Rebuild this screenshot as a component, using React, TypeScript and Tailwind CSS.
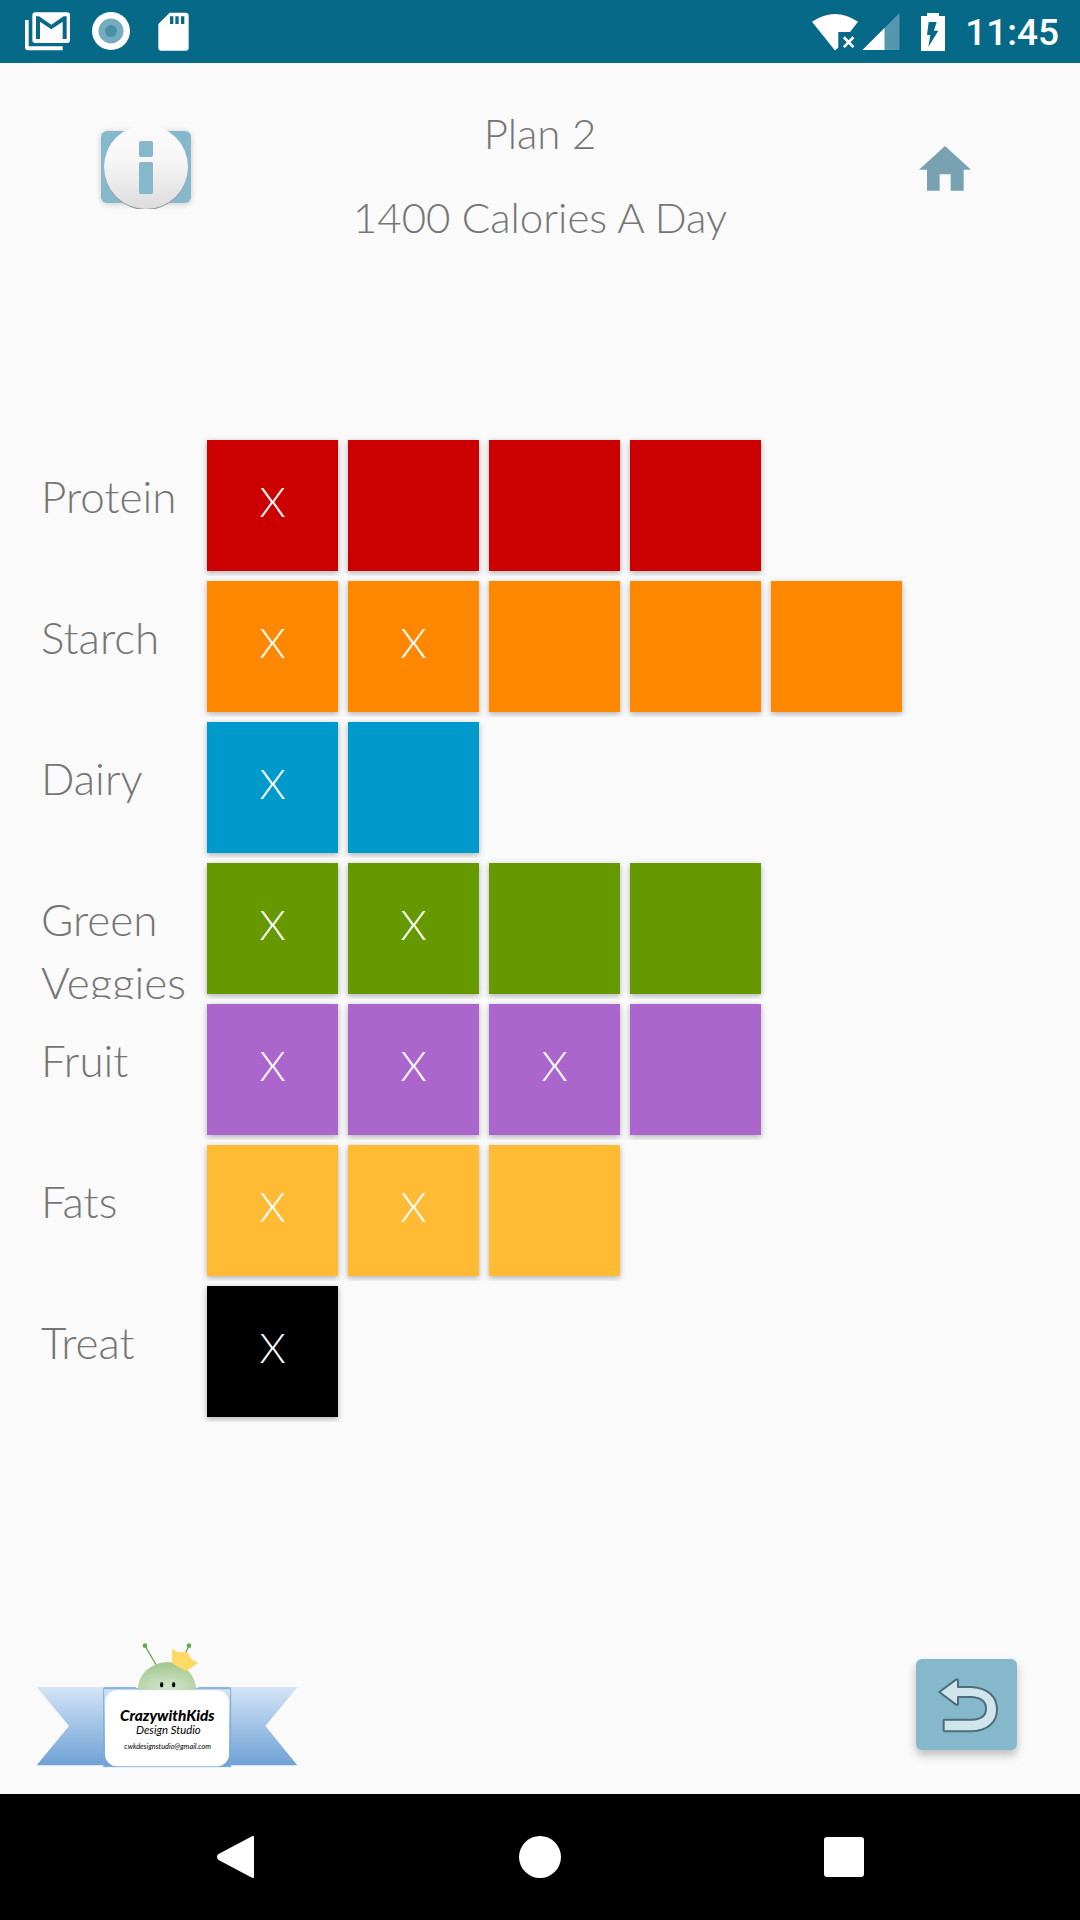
import { useState } from "react";

type Food = { name: string; total: number; used: number; color: string };

const foods: Food[] = [
  { name: "Protein", total: 4, used: 1, color: "bg-[#cc0000]" },
  { name: "Starch", total: 5, used: 2, color: "bg-[#ff8800]" },
  { name: "Dairy", total: 2, used: 1, color: "bg-[#0099cc]" },
  { name: "Green Veggies", total: 4, used: 2, color: "bg-[#669900]" },
  { name: "Fruit", total: 4, used: 3, color: "bg-[#aa66cc]" },
  { name: "Fats", total: 3, used: 2, color: "bg-[#ffbb33]" },
  { name: "Treat", total: 1, used: 1, color: "bg-black" },
];

function StatusBar() {
  return (
    <header className="flex h-[63px] items-center justify-between bg-[#076988] pl-4 pr-[21px] text-white">
      <div className="flex">
        <span className="flex w-[63px] justify-center">
          <svg width="45" height="39" viewBox="75 36 135 117" aria-label="Mail">
            <path d="M75 60h11v79h102v12H84q-9 0-9-9z" fill="#fff" />
            <rect x="97" y="37" width="113" height="92" rx="9" fill="#fff" />
            <path d="M108 117V49h9l37 25 37-25h9v68h-12V65l-34 23-34-23v52z" fill="#076988" />
          </svg>
        </span>
        <span className="flex w-[63px] justify-center">
          <svg width="38" height="38" viewBox="0 0 38 38" aria-label="Recording">
            <circle cx="19" cy="19" r="19" fill="#fff" />
            <circle cx="19" cy="19" r="12.5" fill="#76abbd" />
            <circle cx="19" cy="19" r="6" fill="#4690a9" />
          </svg>
        </span>
        <span className="flex w-[63px] justify-center">
          <svg width="31" height="39" viewBox="474 36 93 117" aria-label="Storage card">
            <path
              fillRule="evenodd"
              fill="#fff"
              d="M509 38h48q9 0 9 9v96q0 9-9 9h-73q-9 0-9-9V72zM510 49v23h10V49zM526 49v23h10V49zM543 49v23h10V49z"
            />
          </svg>
        </span>
      </div>
      <div className="flex items-center">
        <svg width="46" height="38" viewBox="95 36 140 114" aria-label="Wi-Fi without internet">
          <path d="M95 62Q165 15 235 62L211 93H175V141L165 149z" fill="#fff" />
          <path d="M192 109l29 30M221 109l-29 30" stroke="#fff" strokeWidth="8" />
        </svg>
        <svg className="ml-1" width="38" height="38" viewBox="248 36 113 114" aria-label="Signal">
          <path d="M360 36V147H249z" fill="#5598ae" />
          <path d="M315 81V147H249z" fill="#fff" />
        </svg>
        <svg className="ml-[21px]" width="24" height="38" viewBox="426 36 72 114" aria-label="Battery charging">
          <path d="M444 36h36v9h18v105h-72V45h18z" fill="#fff" />
          <path d="M449 63h24l-8 26h13l-30 49 6-36h-10z" fill="#076988" />
        </svg>
        <span className="ml-5 pt-0.5 font-['Roboto',sans-serif] text-[37px] font-medium leading-none">11:45</span>
      </div>
    </header>
  );
}

function Heading() {
  return (
    <div className="grid grid-cols-[1fr_auto_1fr] items-start pl-[101px] pr-[109px]">
      <button aria-label="Information" className="mt-[68px] h-[72px] w-[90px] rounded-md bg-[#85b8cb] shadow-[0_1px_6px_rgba(0,0,0,0.2)]">
        <svg className="overflow-visible" width="90" height="78" viewBox="0 0 90 78">
          <defs>
            <linearGradient id="disc" x1="0" y1="0" x2="0" y2="1">
              <stop offset="0" stopColor="#fbfbfb" />
              <stop offset="0.4" stopColor="#f7f7f7" />
              <stop offset="1" stopColor="#dcdcdc" />
            </linearGradient>
            <clipPath id="discEdge">
              <rect x="0" y="-8" width="90" height="86" />
            </clipPath>
          </defs>
          <g clipPath="url(#discEdge)">
            <circle cx="45" cy="37" r="42" fill="#8f9a9e" />
            <circle cx="45" cy="36" r="42" fill="url(#disc)" />
          </g>
          <rect x="38" y="10" width="14" height="15" rx="2" fill="#a9aeb0" />
          <rect x="38" y="11" width="14" height="15" rx="2" fill="#85b8cb" />
          <rect x="38" y="31" width="14" height="31" rx="2" fill="#a9aeb0" />
          <rect x="38" y="32" width="14" height="31" rx="2" fill="#85b8cb" />
        </svg>
      </button>
      <div className="pb-0.5 pl-2 pt-7 text-center">
        <h1 className="text-[42px] leading-[84px]">Plan 2</h1>
        <p className="text-[42px] leading-[84px]">1400 Calories A Day</p>
      </div>
      <button aria-label="Home" className="mt-[83px] justify-self-end">
        <svg width="52" height="45" viewBox="55 48 156 135">
          <path d="M133 48L211 119H189V182H150V133H117V182H79V119H55z" fill="#78a2b1" />
        </svg>
      </button>
    </div>
  );
}

function FoodRow({ food }: { food: Food }) {
  const [marks, setMarks] = useState(() => Array.from({ length: food.total }, (_, i) => i < food.used));
  const toggle = (index: number) => setMarks(marks.map((m, i) => (i === index ? !m : m)));
  return (
    <li className="flex h-[141px] overflow-hidden">
      <span className="w-[161px] shrink-0 pt-[30px] text-[44px] leading-[63px]">{food.name}</span>
      {marks.map((marked, i) => (
        <button
          key={i}
          aria-label={`${food.name} ${i + 1}`}
          aria-pressed={marked}
          onClick={() => toggle(i)}
          className={`m-[5px] w-[131px] pb-2 text-[42px] text-white shadow-[0_2px_6px_rgba(0,0,0,0.3)] ${food.color}`}
        >
          {marked ? "X" : ""}
        </button>
      ))}
    </li>
  );
}

function StudioLogo() {
  return (
    <svg width="265" height="127" viewBox="45 35 795 381" role="img" aria-label="CrazywithKids Design Studio">
      <defs>
        <linearGradient id="ribbon" x1="0" y1="0" x2="0" y2="1">
          <stop offset="0" stopColor="#d3e4f5" />
          <stop offset="1" stopColor="#6ea1d6" />
        </linearGradient>
        <radialGradient id="head" cx="0.5" cy="0.9" r="0.8">
          <stop offset="0" stopColor="#d4e5cc" />
          <stop offset="1" stopColor="#a5ca93" />
        </radialGradient>
      </defs>
      <path d="M375 47l33 56M507 47l-20 38" stroke="#6aa84f" strokeWidth="4" />
      <circle cx="375" cy="46" r="7" fill="#6aa84f" />
      <circle cx="507" cy="46" r="7" fill="#6aa84f" />
      <path d="M50 170H348L354 178H528L534 170H833L736 287L832 405H50L147 287z" fill="url(#ribbon)" />
      <path d="M354 180a87 84 0 0 1 174 0z" fill="url(#head)" />
      <ellipse cx="425" cy="163" rx="5" ry="8" />
      <ellipse cx="461" cy="163" rx="5" ry="8" />
      <path d="M456 56l18 10h27l15 22 18 9-36 26-42-24z" fill="#ffd966" />
      <rect x="251" y="175" width="381" height="234" fill="url(#ribbon)" stroke="#82abd8" strokeWidth="3" />
      <path d="M348 172H251M534 172h98" fill="none" stroke="#82abd8" strokeWidth="3" />
      <path d="M354 178a87 82 0 0 1 174 0z" fill="url(#head)" />
      <ellipse cx="425" cy="163" rx="5" ry="8" />
      <ellipse cx="461" cy="163" rx="5" ry="8" />
      <path d="M456 56l18 10h27l15 22 18 9-36 26-42-24z" fill="#ffd966" />
      <rect x="255" y="180" width="372" height="228" rx="36" fill="#fff" />
      <g textAnchor="middle" fill="#000" fontFamily="Lato, sans-serif" fontStyle="italic">
        <text x="442" y="273" fontSize="46" fontWeight="900">CrazywithKids</text>
        <text x="445" y="312" fontSize="34" fontWeight="400">Design Studio</text>
        <text x="443" y="357" fontSize="22" fontWeight="400">cwkdesignstudio@gmail.com</text>
      </g>
    </svg>
  );
}

function NavigationBar() {
  return (
    <nav className="flex h-[126px] items-center justify-around bg-black px-[84px]">
      <button aria-label="Back" className="flex w-[63px] justify-center">
        <svg width="38" height="42" viewBox="0 0 38 42">
          <path d="M36 1V41L2 23Q0 21 2 19z" fill="#fff" stroke="#fff" strokeWidth="2" strokeLinejoin="round" />
        </svg>
      </button>
      <button aria-label="Home screen" className="flex w-[63px] justify-center">
        <span className="size-[42px] rounded-full bg-white" />
      </button>
      <button aria-label="Recent apps" className="flex w-[63px] justify-center">
        <span className="size-10 rounded-[3px] bg-white" />
      </button>
    </nav>
  );
}

export default function App() {
  return (
    <div className="flex min-h-screen flex-col bg-[#fafafa] font-['Lato',sans-serif] font-light text-[#757575]">
      <StatusBar />
      <main className="flex flex-1 flex-col">
        <Heading />
        <ul className="mt-[174px] pl-[41px]">
          {foods.map((food) => (
            <FoodRow key={food.name} food={food} />
          ))}
        </ul>
        <div className="mt-auto flex items-end justify-between pb-[25px] pl-[35px] pr-[63px]">
          <StudioLogo />
          <button
            aria-label="Go back"
            className="mb-[19px] flex h-[91px] w-[101px] items-center justify-center rounded-md bg-[#85b8cb] pl-1 pt-0.5 shadow-[0_5px_10px_rgba(0,0,0,0.25)]"
          >
            <svg width="61" height="55" viewBox="144 115 183 165">
              <path
                d="M148 157L198 120Q204 117 204 124V142H245C295 145 321 172 321 209C321 247 295 273 245 275H163Q161 275 161 272V243Q161 240 164 240H245C275 239 288 228 288 207C288 186 275 174 245 172H204V191Q204 198 198 195z"
                fill="#cfe4eb"
                stroke="#4c6c77"
                strokeWidth="6"
                strokeLinejoin="round"
              />
            </svg>
          </button>
        </div>
      </main>
      <NavigationBar />
    </div>
  );
}
